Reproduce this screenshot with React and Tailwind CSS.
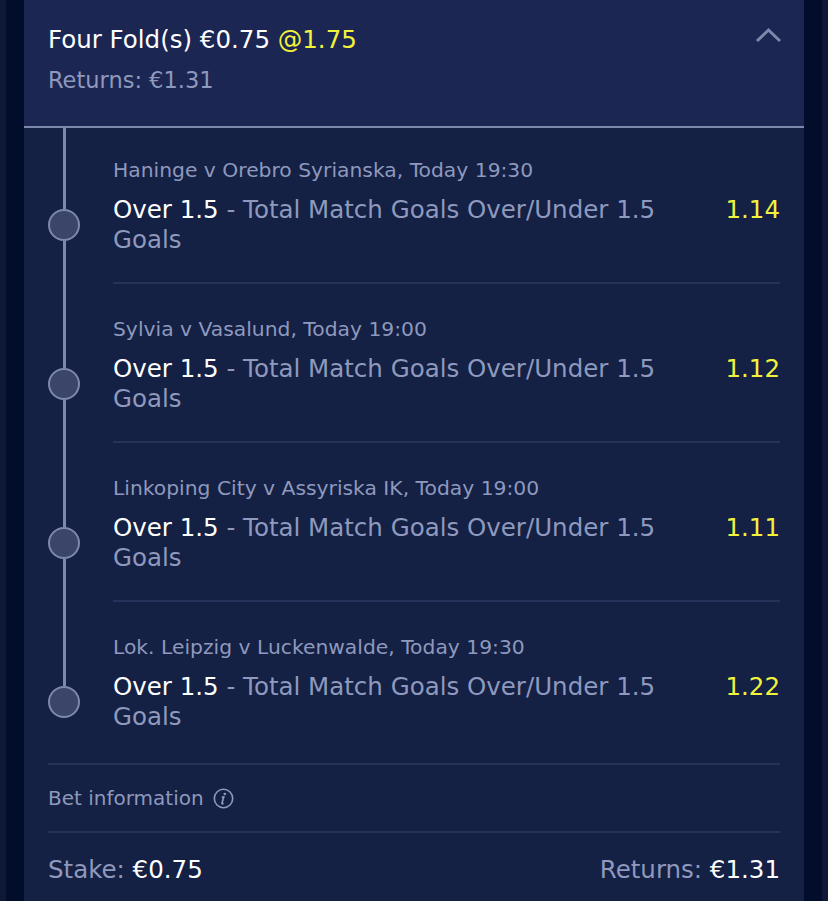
import React from "react";

const legs = [
  { meta: "Haninge v Orebro Syrianska, Today 19:30", odds: "1.14" },
  { meta: "Sylvia v Vasalund, Today 19:00", odds: "1.12" },
  { meta: "Linkoping City v Assyriska IK, Today 19:00", odds: "1.11" },
  { meta: "Lok. Leipzig v Luckenwalde, Today 19:30", odds: "1.22" },
];

function Line({ hidden }) {
  return (
    <div className="w-[65px] shrink-0 flex">
      <div className="w-[32px] flex justify-center">
        <div className={"w-[3px] h-full " + (hidden ? "" : "bg-[#7e88ad]")} />
      </div>
    </div>
  );
}

function Leg({ leg, first, last }) {
  return (
    <div className="flex flex-col">
      <div className="flex">
        <Line />
        <div
          className={
            "flex-1 text-[20.3px] leading-[28px] text-[#8e99bd] " +
            (first ? "pt-[28px]" : "pt-[31px]")
          }
        >
          {leg.meta}
        </div>
      </div>
      <div className="flex">
        <div className="w-[65px] shrink-0 flex">
          <div className="w-[32px] flex flex-col items-center">
            <div className="w-[3px] h-[11px] bg-[#7e88ad]" />
            <div className="w-[3px] flex-1 bg-[#7e88ad]" />
            <div className="w-[32px] h-[32px] rounded-full border-2 border-[#7e88ad] bg-[#3b4569] shrink-0" />
            <div className={"w-[3px] flex-1 " + (last ? "" : "bg-[#7e88ad]")} />
          </div>
        </div>
        <div className="flex-1 flex justify-between pt-[11px]">
          <div className="w-[590px] text-[24.5px] leading-[30px] text-[#8e99bd]">
            <span className="text-white">Over 1.5</span> - Total Match Goals Over/Under 1.5 Goals
          </div>
          <div className="text-[24.5px] leading-[30px] text-[#f2f23c]">{leg.odds}</div>
        </div>
      </div>
      <div className="flex">
        <Line hidden={last} />
        <div className={"flex-1 " + (last ? "h-[31px]" : "h-[29px] border-b-2 border-[#27325a]")} />
      </div>
    </div>
  );
}

export default function App() {
  return (
    <div
      className="min-h-[901px] bg-[#0f1836] px-[6px]"
      style={{ fontFamily: '"DejaVu Sans", Verdana, sans-serif' }}
    >
      <div className="min-h-[901px] bg-[#020c2b] px-[18px]">
        <div className="min-h-[901px] bg-[#142044]">
          <div className="bg-[#1c2652] px-[24px] pt-[25px] pb-[32px] border-b-2 border-[#7e88ad] flex justify-between">
            <div>
              <div className="text-[24.5px] leading-[30px] text-white">
                Four Fold(s) €0.75 <span className="text-[#f2f23c]">@1.75</span>
              </div>
              <div className="mt-[11px] text-[22.5px] leading-[28px] text-[#8e99bd]">Returns: €1.31</div>
            </div>
            <svg width="27" height="16" viewBox="0 0 27 16" className="mt-[2px] mr-[-2px]">
              <path d="M2 14 L13.5 3 L25 14" fill="none" stroke="#7e88ad" strokeWidth="3" />
            </svg>
          </div>
          <div className="px-[24px]">
            {legs.map((leg, i) => (
              <Leg key={i} leg={leg} first={i === 0} last={i === legs.length - 1} />
            ))}
            <div className="border-t-2 border-[#27325a] pt-[19px] pb-[19px] flex items-center gap-[9px] text-[20px] leading-[28px] text-[#8e99bd]">
              <span>Bet information</span>
              <svg width="21" height="21" viewBox="0 0 21 21">
                <circle cx="10.5" cy="10.5" r="9.2" fill="none" stroke="#8e99bd" strokeWidth="1.6" />
                <circle cx="11.8" cy="6" r="1.3" fill="#8e99bd" />
                <path d="M10.6 9 L9 15.2 Q8.8 16.2 10 15.6" fill="none" stroke="#8e99bd" strokeWidth="1.7" strokeLinecap="round" />
                <path d="M9.3 9.2 L10.8 8.9" fill="none" stroke="#8e99bd" strokeWidth="1.6" strokeLinecap="round" />
              </svg>
            </div>
            <div className="border-t-2 border-[#27325a] pt-[22px] flex justify-between text-[24.5px] leading-[30px]">
              <div>
                <span className="text-[#8e99bd]">Stake: </span>
                <span className="text-white">€0.75</span>
              </div>
              <div>
                <span className="text-[#8e99bd]">Returns: </span>
                <span className="text-white">€1.31</span>
              </div>
            </div>
          </div>
        </div>
      </div>
    </div>
  );
}
